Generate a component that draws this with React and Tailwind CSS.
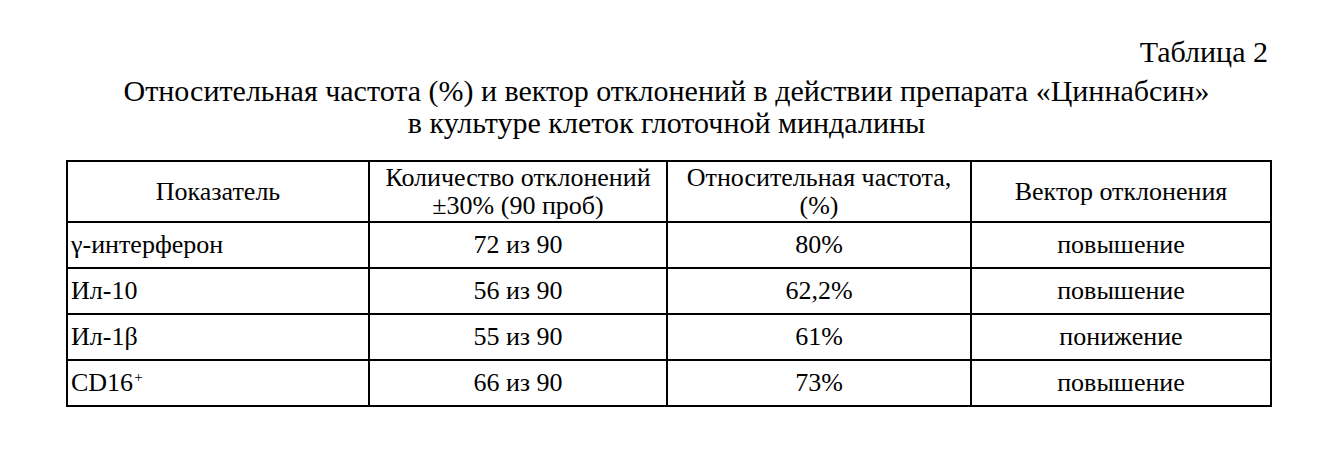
import React from "react";

const rows = [
  { name: "γ-интерферон", count: "72 из 90", freq: "80%", vec: "повышение" },
  { name: "Ил-10", count: "56 из 90", freq: "62,2%", vec: "повышение" },
  { name: "Ил-1β", count: "55 из 90", freq: "61%", vec: "понижение" },
  { name: "CD16", sup: "+", count: "66 из 90", freq: "73%", vec: "повышение" },
];

export default function App() {
  return (
    <div
      className="w-[1326px] h-[457px] bg-white text-black pl-[66px] pt-[35px]"
      style={{ fontFamily: '"Liberation Serif", "Times New Roman", serif' }}
    >
      <div className="w-[1204px]">
        {/* caption */}
        <div className="text-right text-[30px] leading-[34px] pr-[2px]">Таблица 2</div>
        <div className="mt-[6px] text-center text-[30px] leading-[32px] -ml-[3px]">
          Относительная частота (%) и вектор отклонений в действии препарата «Циннабсин»
          <br />
          в культуре клеток глоточной миндалины
        </div>

        {/* table */}
        <table className="mt-[21px] border-collapse border-2 border-black text-[26px] leading-[28px] table-fixed w-[1204px]">
          <colgroup>
            <col className="w-[302px]" />
            <col className="w-[298px]" />
            <col className="w-[304px]" />
            <col className="w-[300px]" />
          </colgroup>
          <thead>
            <tr className="h-[61px]">
              <th className="border-2 border-black font-normal text-center">Показатель</th>
              <th className="border-2 border-black font-normal text-center">
                Количество отклонений
                <br />
                ±30% (90 проб)
              </th>
              <th className="border-2 border-black font-normal text-center">
                Относительная частота,
                <br />
                (%)
              </th>
              <th className="border-2 border-black font-normal text-center">Вектор отклонения</th>
            </tr>
          </thead>
          <tbody>
            {rows.map((r) => (
              <tr key={r.name} className="h-[46px]">
                <td className="border-2 border-black pl-[3px] text-left">
                  {r.name}
                  {r.sup && <sup className="text-[15px] relative -top-[9px] ml-[1px]">{r.sup}</sup>}
                </td>
                <td className="border-2 border-black text-center">{r.count}</td>
                <td className="border-2 border-black text-center">{r.freq}</td>
                <td className="border-2 border-black text-center">{r.vec}</td>
              </tr>
            ))}
          </tbody>
        </table>
      </div>
    </div>
  );
}
